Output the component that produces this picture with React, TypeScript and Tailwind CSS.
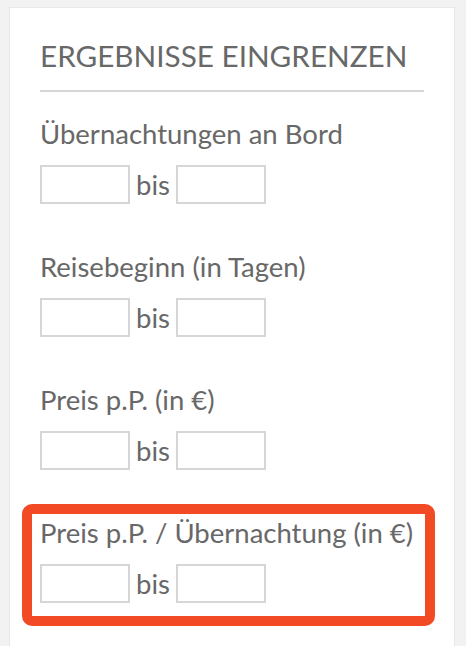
import React from "react";

const sections = [
  "Übernachtungen an Bord",
  "Reisebeginn (in Tagen)",
  "Preis p.P. (in €)",
];

function RangeRow() {
  return (
    <div className="flex items-center h-[39px] mt-[15px]">
      <input className="w-[90px] h-[39px] border-2 border-[#d6d6d6] bg-white outline-none" />
      <span className="px-[6px] text-[27.5px] leading-[33px] text-[#686868]">bis</span>
      <input className="w-[90px] h-[39px] border-2 border-[#d6d6d6] bg-white outline-none" />
    </div>
  );
}

export default function App() {
  return (
    <div
      className="min-h-[646px] bg-[#f2f2f2] pl-[9px] pr-[11px] pt-[7px]"
      style={{ fontFamily: "Lato, 'Open Sans', sans-serif" }}
    >
      <div className="bg-white border border-[#e8e8e8] border-b-0 h-[639px] px-[30px] pt-[30px] text-[#686868]">
        <h2 className="text-[29.7px] leading-[36px] font-normal">
          ERGEBNISSE EINGRENZEN
        </h2>
        <div className="h-[2px] bg-[#d6d6d6] mt-[16px]" />
        {sections.map((s, i) => (
          <div key={i} className={i === 0 ? "mt-[25px]" : "mt-[46px]"}>
            <div className="text-[27.5px] leading-[33px]">{s}</div>
            <RangeRow />
          </div>
        ))}
        <div className="relative mt-[46px]">
          <div className="absolute -left-[18px] -top-[12px] w-[413px] h-[122px] border-[10px] border-[#f24a25] rounded-[10px] pointer-events-none" />
          <div className="text-[27.5px] leading-[33px]">
            Preis p.P. / Übernachtung (in €)
          </div>
          <RangeRow />
        </div>
      </div>
    </div>
  );
}
